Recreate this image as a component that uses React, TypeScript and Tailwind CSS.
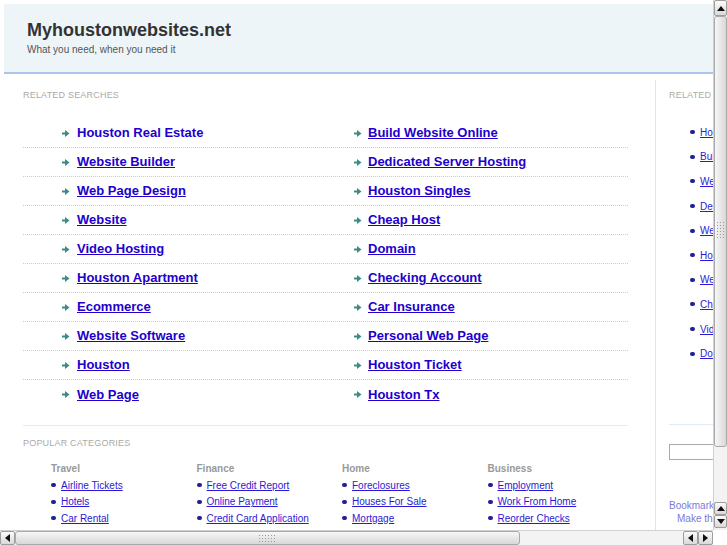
import React from 'react';

const leftLinks = [
  'Houston Real Estate',
  'Website Builder',
  'Web Page Design',
  'Website',
  'Video Hosting',
  'Houston Apartment',
  'Ecommerce',
  'Website Software',
  'Houston',
  'Web Page',
];

const rightLinks = [
  'Build Website Online',
  'Dedicated Server Hosting',
  'Houston Singles',
  'Cheap Host',
  'Domain',
  'Checking Account',
  'Car Insurance',
  'Personal Web Page',
  'Houston Ticket',
  'Houston Tx',
];

const categories = [
  { title: 'Travel', items: ['Airline Tickets', 'Hotels', 'Car Rental'] },
  { title: 'Finance', items: ['Free Credit Report', 'Online Payment', 'Credit Card Application'] },
  { title: 'Home', items: ['Foreclosures', 'Houses For Sale', 'Mortgage'] },
  { title: 'Business', items: ['Employment', 'Work From Home', 'Reorder Checks'] },
];

const sideLinks = [
  'Houston Real Estate',
  'Build Website Online',
  'Website Builder',
  'Dedicated Server Hosting',
  'Web Page Design',
  'Houston Singles',
  'Website',
  'Cheap Host',
  'Video Hosting',
  'Domain',
];

function Arrow() {
  return (
    <svg width="8" height="7" viewBox="0 0 8 7" className="shrink-0">
      <rect x="0" y="2.5" width="4" height="2" fill="#3b8c87" />
      <polygon points="3,0 7.5,3.5 3,7" fill="#3b8c87" />
    </svg>
  );
}

function Bullet() {
  return <span className="inline-block w-[5px] h-[4px] rounded-full bg-[#1f1f96] shrink-0" />;
}

function Tri({ dir }: { dir: 'up' | 'down' | 'left' | 'right' }) {
  const pts = {
    up: '4,1 8,6 0,6',
    down: '0,1 8,1 4,6',
    left: '6,0 6,8 1,4',
    right: '1,0 1,8 6,4',
  }[dir];
  const w = dir === 'up' || dir === 'down' ? 8 : 7;
  const h = dir === 'up' || dir === 'down' ? 7 : 8;
  return (
    <svg width={w} height={h} viewBox={`0 0 ${w} ${h}`}>
      <polygon points={pts} fill="#111" />
    </svg>
  );
}

function Grip({ vertical }: { vertical?: boolean }) {
  return (
    <div className={`grid gap-[2px] ${vertical ? 'grid-cols-3' : 'grid-cols-6'}`}>
      {Array.from({ length: 18 }).map((_, i) => (
        <span key={i} className="w-[1px] h-[1px] bg-[#9a9a9a]" />
      ))}
    </div>
  );
}

function ArrowBox({ dir, className = '' }: { dir: 'up' | 'down' | 'left' | 'right'; className?: string }) {
  return (
    <div className={`flex items-center justify-center border border-[#9d9d9d] rounded-[2px] bg-gradient-to-b from-[#fbfbfb] to-[#d9d9d9] ${className}`}>
      <Tri dir={dir} />
    </div>
  );
}

export default function App() {
  return (
    <div className="w-[727px] h-[545px] flex flex-col overflow-hidden bg-white font-['Liberation_Sans',Arial,sans-serif]">
      <div className="flex flex-1 min-h-0">
        <div className="w-[713px] overflow-hidden">
          <div className="w-[920px] pt-[4px] pl-[4px]">
            {/* header */}
            <div className="h-[70px] bg-[#eef5f8] border-b-2 border-[#abc4ea] pl-[23px] pt-[15px]">
              <div className="text-[18px] leading-[22px] font-bold text-[#333]">Myhoustonwebsites.net</div>
              <div className="mt-[2px] text-[10px] leading-[14px] text-[#555]">What you need, when you need it</div>
            </div>

            <div className="flex mt-[6px]">
              {/* main column */}
              <div className="w-[651px] pl-[19px]">
                <div className="pt-[10px] text-[9px] leading-[11px] tracking-[0.2px] text-[#aaa] uppercase">Related Searches</div>
                <div className="mt-[18px] w-[605px]">
                  {leftLinks.map((l, i) => (
                    <div
                      key={l}
                      className={`flex h-[29px] items-center ${i < leftLinks.length - 1 ? 'border-b border-dotted border-[#b6cdeb]' : ''}`}
                    >
                      <div className="w-[331px] pl-[39px] flex items-center gap-[7px]">
                        <Arrow />
                        <a className={`text-[13px] font-bold text-[#2200cc] ${i === 0 ? '' : 'underline'}`}>{l}</a>
                      </div>
                      <div className="flex items-center gap-[6px]">
                        <Arrow />
                        <a className="text-[13px] font-bold text-[#2200cc] underline">{rightLinks[i]}</a>
                      </div>
                    </div>
                  ))}
                </div>

                <div className="mt-[16px] w-[605px] border-t border-[#e1eaf5]">
                  <div className="pt-[12px] text-[9px] leading-[11px] tracking-[0.2px] text-[#aaa] uppercase">Popular Categories</div>
                  <div className="mt-[13px] pl-[28px] flex">
                    {categories.map((c) => (
                      <div key={c.title} className="w-[145.5px] shrink-0">
                        <div className="text-[10px] leading-[13px] font-bold text-[#999]">{c.title}</div>
                        <div className="mt-[2px]">
                          {c.items.map((it) => (
                            <div key={it} className="flex items-center gap-[5px] h-[16.5px]">
                              <Bullet />
                              <a className="text-[10px] text-[#2b19d6] underline whitespace-nowrap">{it}</a>
                            </div>
                          ))}
                        </div>
                      </div>
                    ))}
                  </div>
                </div>
              </div>

              {/* sidebar */}
              <div className="w-[230px] border-l border-[#dbe4f3] pl-[13px] h-[460px]">
                <div className="pt-[10px] text-[9px] leading-[11px] tracking-[0.2px] text-[#aaa] uppercase">Related Searches</div>
                <div className="mt-[19px]">
                  {sideLinks.map((l) => (
                    <div key={l} className="flex items-center gap-[5px] h-[24.6px] pl-[21px]">
                      <Bullet />
                      <a className="text-[10px] text-[#2b19d6] underline">{l}</a>
                    </div>
                  ))}
                </div>
                <div className="mt-[58px] border-t border-[#e1eaf5]">
                  <div className="mt-[19px] w-[160px] h-[16px] border border-[#aaa]" />
                  <div className="mt-[39px] text-[10px] leading-[13px] text-[#7a7ad8]">
                    <div>Bookmark this page</div>
                    <div className="pl-[8px]">Make this your homepage</div>
                  </div>
                </div>
              </div>
            </div>
          </div>
        </div>

        {/* vertical scrollbar */}
        <div className="w-[14px] flex flex-col bg-[#f1f1f1] border-l border-[#d0d0d0]">
          <ArrowBox dir="up" className="h-[16px]" />
          <div className="h-[431px] rounded-[3px] border border-[#a9a9a9] bg-gradient-to-r from-[#f7f7f7] to-[#d8d8d8] flex flex-col items-center pt-[205px]">
            <Grip vertical />
          </div>
          <div className="flex-1 bg-[#f3f3f3]" />
          <ArrowBox dir="up" className="h-[13px]" />
          <ArrowBox dir="down" className="h-[13px]" />
          <div className="h-[2px]" />
        </div>
      </div>

      {/* horizontal scrollbar */}
      <div className="flex h-[15px]">
        <div className="w-[713px] flex bg-[#f3f3f3] border-t border-[#d0d0d0]">
          <ArrowBox dir="left" className="w-[15px]" />
          <div className="w-[505px] rounded-[3px] border border-[#a9a9a9] bg-gradient-to-b from-[#f7f7f7] to-[#d8d8d8] flex items-center pl-[243px]">
            <Grip />
          </div>
          <div className="flex-1" />
          <ArrowBox dir="left" className="w-[15px]" />
          <ArrowBox dir="right" className="w-[15px]" />
        </div>
        <div className="w-[14px] bg-white" />
      </div>
    </div>
  );
}
